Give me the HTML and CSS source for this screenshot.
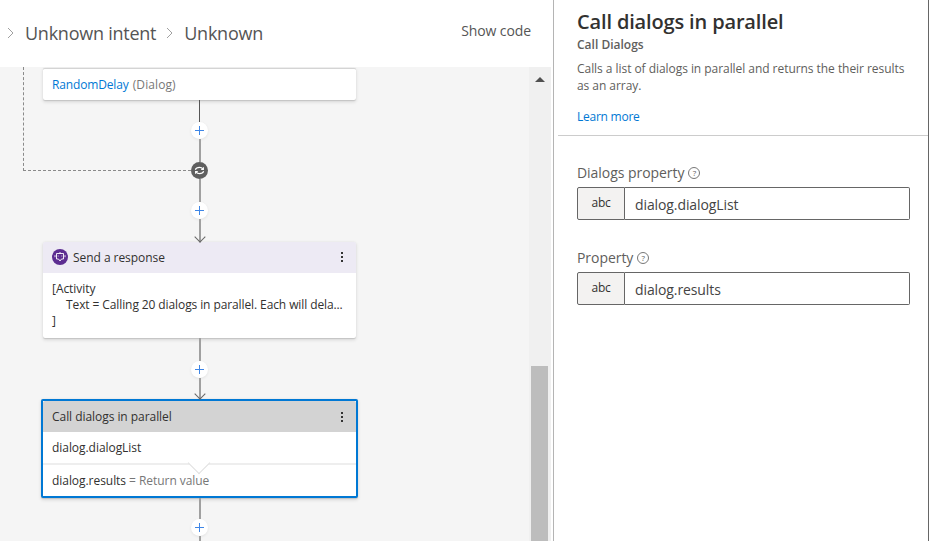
FILE: index.html
```html
<!DOCTYPE html>
<html lang="en">

<head>
    <meta charset="UTF-8">
    <title>Call dialogs in parallel</title>
    <link rel="stylesheet" href="styles.css">
</head>

<body>
    <div class="app">
        <main class="editor">
            <header class="topbar">
                <nav class="crumbs">
                    <svg class="chev" width="7" height="12" viewBox="0 0 7 12"><path d="M1 1l5 5-5 5" /></svg>
                    <span>Unknown intent</span>
                    <svg class="chev" width="7" height="12" viewBox="0 0 7 12"><path d="M1 1l5 5-5 5" /></svg>
                    <span>Unknown</span>
                </nav>
                <button class="show-code">Show code</button>
            </header>

            <div class="canvas-wrap">
                <div class="canvas">
                    <div class="loop-back"></div>
                    <div class="flow">
                        <div class="card card-top">
                            <a class="link">RandomDelay</a> <span class="muted">(Dialog)</span>
                        </div>

                        <div class="edge">
                            <div class="line dark h22"></div>
                            <div class="plus"><svg width="11" height="11" viewBox="0 0 11 11"><path d="M5.5 1v9M1 5.5h9" /></svg></div>
                            <div class="line h23"></div>
                            <div class="loop-node">
                                <svg width="11" height="11" viewBox="0 0 11 11">
                                    <path d="M1.3 4.8C1.9 3.2 3.5 2.4 5.5 2.4c1.4 0 2.6.5 3.3 1.5M9.7 6.2C9.1 7.8 7.5 8.6 5.5 8.6c-1.4 0-2.6-.5-3.3-1.5" />
                                    <path d="M9.4 2.2v2.2H7.2M1.6 8.8V6.6h2.2" />
                                </svg>
                            </div>
                            <div class="line h23"></div>
                            <div class="plus"><svg width="11" height="11" viewBox="0 0 11 11"><path d="M5.5 1v9M1 5.5h9" /></svg></div>
                            <div class="line arrow h23"></div>
                        </div>

                        <div class="card">
                            <div class="card-head head-purple">
                                <span class="bot-icon">
                                    <svg width="12" height="12" viewBox="0 0 12 12"><path d="M6 1v1.5M2.5 2.5h7V8H7.5L6 10 4.5 8h-2zM1 4.2v2M11 4.2v2M4.2 4.6v.8M7.8 4.6v.8" /></svg>
                                </span>
                                <span class="card-title">Send a response</span>
                                <span class="kebab"><i></i><i></i><i></i></span>
                            </div>
                            <div class="card-body">
                                <div>[Activity</div>
                                <div class="indent">Text = Calling 20 dialogs in parallel. Each will dela...</div>
                                <div>]</div>
                            </div>
                        </div>

                        <div class="edge">
                            <div class="line h23"></div>
                            <div class="plus"><svg width="11" height="11" viewBox="0 0 11 11"><path d="M5.5 1v9M1 5.5h9" /></svg></div>
                            <div class="line arrow h21"></div>
                        </div>

                        <div class="card card-selected">
                            <div class="card-head head-grey">
                                <span class="card-title">Call dialogs in parallel</span>
                                <span class="kebab"><i></i><i></i><i></i></span>
                            </div>
                            <div class="card-row row-first">dialog.dialogList</div>
                            <div class="card-row">dialog.results <span class="muted">= Return value</span></div>
                        </div>

                        <div class="edge">
                            <div class="line h21"></div>
                            <div class="plus"><svg width="11" height="11" viewBox="0 0 11 11"><path d="M5.5 1v9M1 5.5h9" /></svg></div>
                            <div class="line h22"></div>
                        </div>
                    </div>
                </div>
                <div class="scrollbar">
                    <div class="scroll-up"></div>
                    <div class="scroll-thumb"></div>
                </div>
            </div>
        </main>

        <aside class="panel">
            <section class="panel-head">
                <h1>Call dialogs in parallel</h1>
                <h2>Call Dialogs</h2>
                <p>Calls a list of dialogs in parallel and returns the their results as an array.</p>
                <a class="link learn">Learn more</a>
            </section>

            <section class="panel-form">
                <div class="field">
                    <label>Dialogs property <span class="help">?</span></label>
                    <div class="control">
                        <span class="type-btn">abc</span>
                        <span class="value">dialog.dialogList</span>
                    </div>
                </div>
                <div class="field">
                    <label>Property <span class="help">?</span></label>
                    <div class="control">
                        <span class="type-btn">abc</span>
                        <span class="value">dialog.results</span>
                    </div>
                </div>
            </section>
        </aside>
    </div>
</body>

</html>
```

FILE: styles.css
```css
*,
*::before,
*::after {
    box-sizing: border-box;
}

html,
body {
    height: 100%;
}

body {
    margin: 0;
    overflow: hidden;
    background: #fff;
    color: #323130;
    font-family: 'Open Sans', 'Noto Sans', sans-serif;
    font-size: 12px;
    letter-spacing: -0.05px;
}

.app {
    display: grid;
    grid-template-columns: 553px 1fr;
    height: 100vh;
}

.editor {
    display: flex;
    flex-direction: column;
    min-width: 0;
    min-height: 0;
}

/* top bar */
.topbar {
    display: flex;
    align-items: center;
    justify-content: space-between;
    flex: none;
    height: 67px;
    padding: 0 22px 1px 7px;
}

.crumbs {
    display: flex;
    align-items: center;
    color: #555;
    font-size: 18px;
    letter-spacing: -0.25px;
}

.chev {
    fill: none;
    stroke: #a0a0a0;
    stroke-width: 1;
    margin-right: 11px;
}

.crumbs span {
    margin-right: 10px;
}

.show-code {
    margin-top: -5px;
    padding: 0;
    border: 0;
    background: none;
    color: #555;
    font: inherit;
    font-size: 14px;
    letter-spacing: -0.1px;
}

/* canvas */
.canvas-wrap {
    display: flex;
    flex: 1;
    min-height: 0;
    padding-right: 2px;
}

.canvas {
    position: relative;
    flex: 1;
    overflow: hidden;
    padding: 1px 0 0 43px;
    background: #f5f5f5;
}

.loop-back {
    position: absolute;
    top: 0;
    left: 23px;
    width: 168px;
    height: 104px;
    border-left: 1px dashed #8a8a8a;
    border-bottom: 1px dashed #8a8a8a;
}

.flow {
    position: relative;
    display: flex;
    flex-direction: column;
    align-items: center;
    width: 313px;
}

.card {
    flex: none;
    width: 100%;
    border-radius: 2px;
    background: #fff;
    box-shadow: 0 1.6px 3.6px rgba(0, 0, 0, .13), 0 .3px .9px rgba(0, 0, 0, .11);
}

.card-top {
    height: 32px;
    padding: 0 9px;
    border-top: 1px solid #d4d4d4;
    line-height: 32px;
    color: #323130;
}

.card-top .link {
    letter-spacing: -0.15px;
}

.card-top .muted {
    margin-left: 1px;
    letter-spacing: 0.1px;
}

.card-head {
    display: flex;
    align-items: center;
    height: 31px;
    padding: 0 9px;
    border-radius: 2px 2px 0 0;
}

.head-purple {
    background: #edeaf4;
    padding-bottom: 1px;
}

.head-grey {
    background: #d3d3d3;
}

.card-title {
    flex: 1;
}

.bot-icon {
    display: flex;
    align-items: center;
    justify-content: center;
    width: 16px;
    height: 16px;
    margin-right: 5px;
    border-radius: 50%;
    background: #5c2d91;
}

.bot-icon svg {
    fill: none;
    stroke: #fff;
    stroke-width: .9;
}

.kebab {
    display: flex;
    flex-direction: column;
    gap: 2px;
    margin-right: 4px;
}

.kebab i {
    width: 2px;
    height: 2px;
    background: #333;
}

.card-body {
    height: 65px;
    padding: 8px 9px;
    line-height: 16px;
    white-space: nowrap;
}

.indent {
    padding-left: 14px;
    letter-spacing: -0.1px;
}

.card-selected {
    width: 317px;
    border: 2px solid #0078d4;
}

.card-row {
    height: 31px;
    padding: 0 9px;
    line-height: 31px;
}

.row-first {
    position: relative;
    height: 33px;
    border-bottom: 2px solid #eee;
}

/* notch on the row divider */
.row-first::after {
    content: "";
    position: absolute;
    left: 148px;
    bottom: -8px;
    width: 16px;
    height: 16px;
    background: #fff;
    border-right: 1px solid #e0e0e0;
    border-bottom: 1px solid #e0e0e0;
    transform: rotate(45deg);
}

.link {
    color: #0078d4;
}

.muted {
    color: #777;
}

/* edges between cards */
.edge {
    display: flex;
    flex-direction: column;
    align-items: center;
    flex: none;
}

.line {
    position: relative;
    width: 2px;
    background: #a0a0a0;
}

.line.dark {
    width: 1px;
    background: #555;
}

.h21 {
    height: 21px;
}

.h22 {
    height: 22px;
}

.h23 {
    height: 23px;
}

.arrow::after {
    content: "";
    position: absolute;
    left: -3px;
    bottom: 1px;
    width: 8px;
    height: 8px;
    border-right: 1px solid #666;
    border-bottom: 1px solid #666;
    transform: rotate(45deg);
}

.plus,
.loop-node {
    display: flex;
    align-items: center;
    justify-content: center;
    width: 17px;
    height: 17px;
    border-radius: 50%;
}

.plus {
    background: #fff;
    box-shadow: 0 1px 3px rgba(0, 0, 0, .08);
}

.plus svg {
    fill: none;
    stroke: #3f86e6;
    stroke-width: 1;
}

.loop-node {
    background: #5f5f5f;
}

.loop-node svg {
    fill: none;
    stroke: #fff;
    stroke-width: 1.1;
}

/* fake scrollbar */
.scrollbar {
    display: flex;
    flex-direction: column;
    justify-content: space-between;
    flex: none;
    width: 22px;
    background: #f0f0f0;
}

.scroll-up {
    align-self: center;
    width: 0;
    height: 0;
    margin-top: 10px;
    border-left: 5px solid transparent;
    border-right: 5px solid transparent;
    border-bottom: 5px solid #505050;
}

.scroll-thumb {
    width: 17px;
    height: 175px;
    margin-left: 2px;
    background: #bdbdbd;
}

/* right panel */
.panel {
    display: flex;
    flex-direction: column;
    border-left: 1px solid #b4b4b4;
    border-right: 1px solid #666;
}

.panel-head {
    height: 136px;
    margin-left: 4px;
    padding: 8px 19px 0;
    border-bottom: 1px solid #ccc;
}

.panel-head h1 {
    margin: 0;
    font-size: 20px;
    font-weight: 600;
    line-height: 28px;
    letter-spacing: -0.15px;
}

.panel-head h2 {
    margin: 1px 0 0;
    color: #605e5c;
    font-size: 12px;
    font-weight: 600;
    line-height: 16px;
    letter-spacing: 0;
}

.panel-head p {
    margin: 7px 0 0;
    color: #605e5c;
    line-height: 17px;
}

.learn {
    display: block;
    margin-top: 15px;
    line-height: 16px;
    letter-spacing: -0.25px;
}

.panel-form {
    padding: 26px 18px 0 23px;
}

.field {
    margin-bottom: 27px;
}

.field label {
    display: flex;
    align-items: center;
    gap: 4px;
    height: 21px;
    margin-bottom: 4px;
    color: #605e5c;
    font-size: 14px;
    letter-spacing: -0.05px;
}

.help {
    display: flex;
    align-items: center;
    justify-content: center;
    width: 12px;
    height: 12px;
    border: 1px solid #777;
    border-radius: 50%;
    font-size: 8px;
    letter-spacing: 0;
}

.control {
    display: flex;
    height: 33px;
}

.type-btn {
    flex: none;
    width: 48px;
    padding-bottom: 3px;
    border: 1px solid #666;
    border-radius: 2px 0 0 2px;
    background: #f3f2f1;
    line-height: 29px;
    text-align: center;
    letter-spacing: -0.25px;
}

.value {
    flex: 1;
    padding: 0 10px;
    border: 1px solid #666;
    border-left: 0;
    border-radius: 0 2px 2px 0;
    color: #444;
    font-size: 14px;
    letter-spacing: -0.1px;
    line-height: 33px;
}
```
